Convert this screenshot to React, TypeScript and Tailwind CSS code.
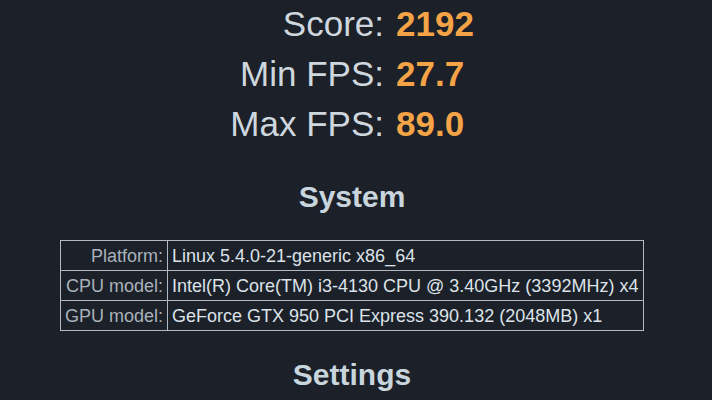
export default function App() {
  const scores = [
    { label: "Score:", value: "2192" },
    { label: "Min FPS:", value: "27.7" },
    { label: "Max FPS:", value: "89.0" },
  ];

  const system = [
    { label: "Platform:", value: "Linux 5.4.0-21-generic x86_64" },
    { label: "CPU model:", value: "Intel(R) Core(TM) i3-4130 CPU @ 3.40GHz (3392MHz) x4" },
    { label: "GPU model:", value: "GeForce GTX 950 PCI Express 390.132 (2048MB) x1" },
  ];

  return (
    <div
      className="w-[712px] h-[400px] overflow-hidden bg-[#1b2029] text-[#cfd7de]"
      style={{ fontFamily: '"Liberation Sans", Arial, sans-serif' }}
    >
      <div className="w-[704px] flex flex-col items-center">
        {/* results */}
        <div className="w-full grid grid-cols-[384px_1fr] gap-x-[12px] mt-[-1px] text-[35px] leading-[50px]">
          {scores.map((s) => (
            <div key={s.label} className="contents">
              <span className="text-right">{s.label}</span>
              <span className="font-bold text-[#f4a446]">{s.value}</span>
            </div>
          ))}
        </div>

        <h2 className="mt-[30px] text-[30px] leading-[36px] font-bold text-[#c9d5dd]">System</h2>

        <table className="mt-[25px] w-[584px] border-collapse text-[18px] leading-[20px]">
          <tbody>
            {system.map((r) => (
              <tr key={r.label} className="h-[30px]">
                <td className="w-[107px] border border-[#b1b9c1] pr-[4px] text-right text-[#a9b2ba] whitespace-nowrap">
                  {r.label}
                </td>
                <td className="border border-[#b1b9c1] pl-[4px] text-[#dde3e8] whitespace-nowrap">{r.value}</td>
              </tr>
            ))}
          </tbody>
        </table>

        <h2 className="mt-[26px] text-[30px] leading-[36px] font-bold text-[#c9d5dd]">Settings</h2>
      </div>
    </div>
  );
}
